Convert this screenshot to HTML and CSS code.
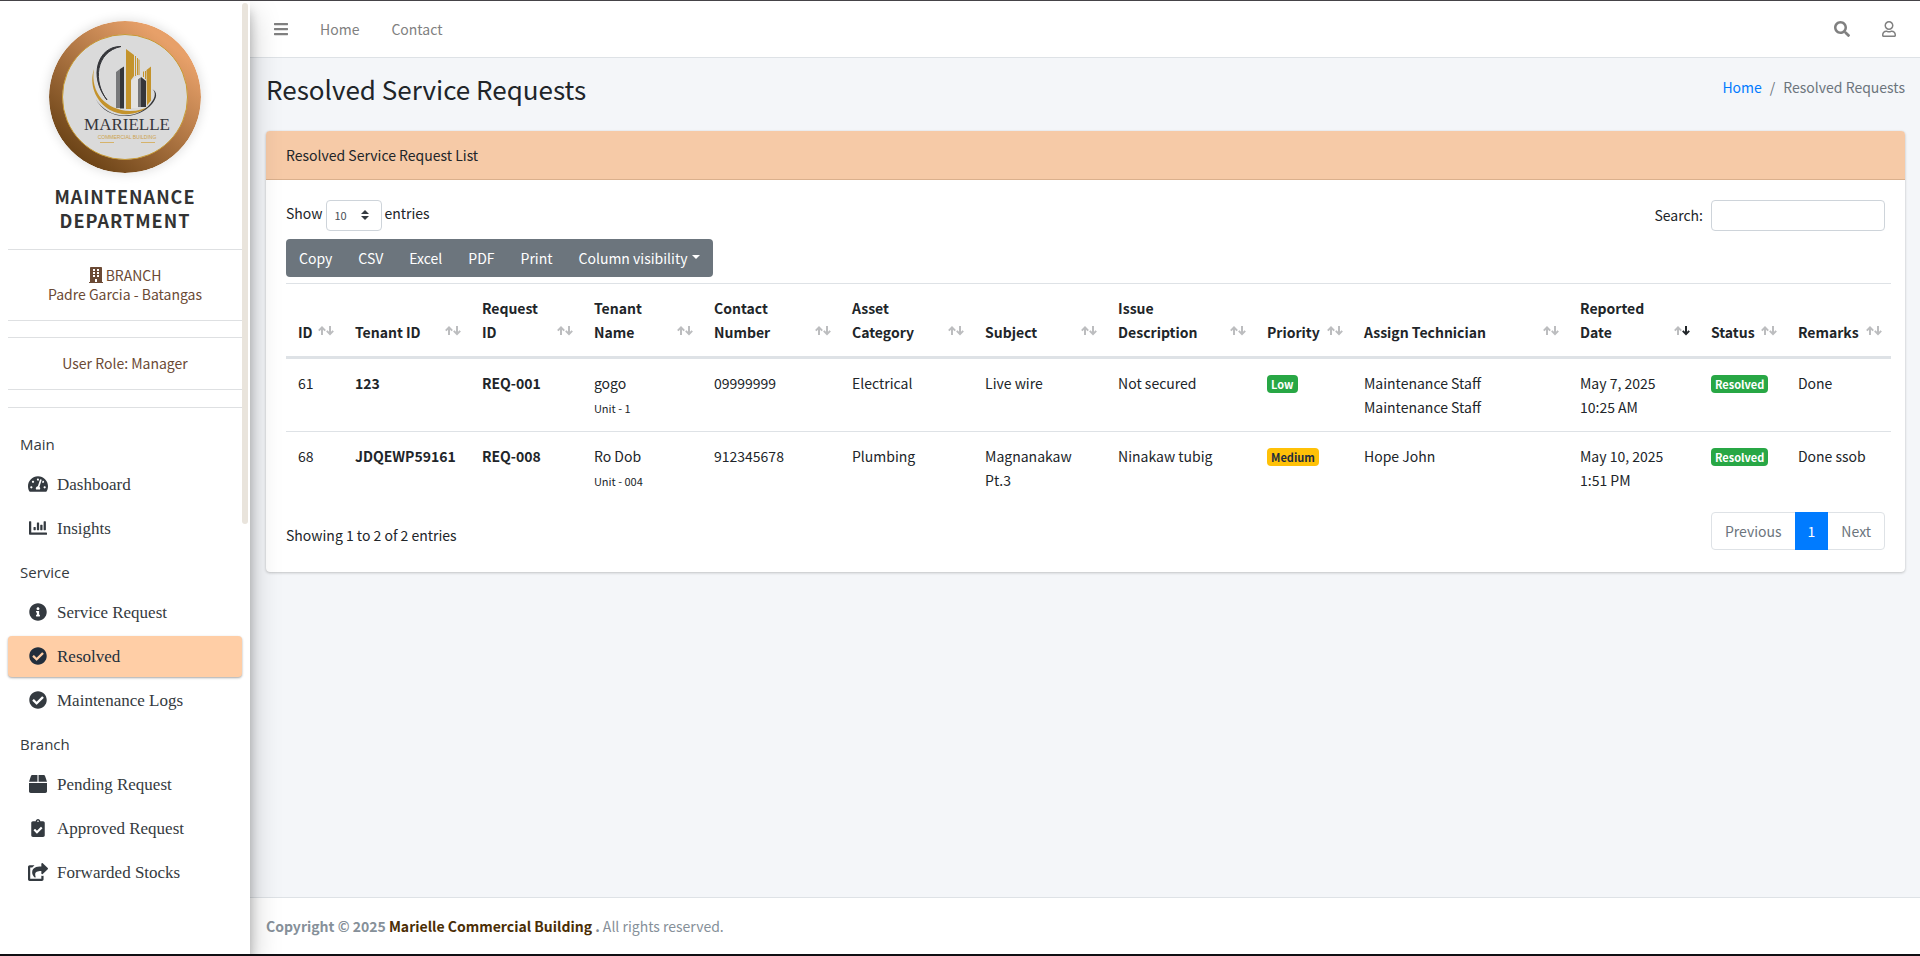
FILE: index.html
```html
<!DOCTYPE html>
<html lang="en">
<head>
<meta charset="utf-8">
<meta name="viewport" content="width=device-width, initial-scale=1">
<title>Resolved Service Requests</title>
<link rel="stylesheet" href="styles.css">
</head>
<body>
<svg class="sprite" aria-hidden="true">
  <symbol id="i-bars" viewBox="0 0 448 512"><path d="M16 132h416c8.837 0 16-7.163 16-16V76c0-8.837-7.163-16-16-16H16C7.163 60 0 67.163 0 76v40c0 8.837 7.163 16 16 16zm0 160h416c8.837 0 16-7.163 16-16v-40c0-8.837-7.163-16-16-16H16c-8.837 0-16 7.163-16 16v40c0 8.837 7.163 16 16 16zm0 160h416c8.837 0 16-7.163 16-16v-40c0-8.837-7.163-16-16-16H16c-8.837 0-16 7.163-16 16v40c0 8.837 7.163 16 16 16z"/></symbol>
  <symbol id="i-search" viewBox="0 0 512 512"><path d="M505 442.7L405.3 343c-4.5-4.5-10.6-7-17-7H372c27.6-35.3 44-79.7 44-128C416 93.1 322.9 0 208 0S0 93.1 0 208s93.1 208 208 208c48.3 0 92.7-16.4 128-44v16.3c0 6.4 2.5 12.5 7 17l99.7 99.7c9.4 9.4 24.6 9.4 33.9 0l28.3-28.3c9.4-9.4 9.4-24.6.1-34zM208 336c-70.7 0-128-57.2-128-128 0-70.7 57.2-128 128-128 70.7 0 128 57.2 128 128 0 70.7-57.2 128-128 128z"/></symbol>
  <symbol id="i-user" viewBox="0 0 448 512"><path d="M313.6 304c-28.7 0-42.5 16-89.6 16-47.1 0-60.8-16-89.6-16C60.2 304 0 364.2 0 438.4V464c0 26.5 21.5 48 48 48h352c26.5 0 48-21.5 48-48v-25.6c0-74.2-60.2-134.4-134.4-134.4zM400 464H48v-25.6c0-47.6 38.8-86.4 86.4-86.4 14.6 0 38.3 16 89.6 16 51.7 0 74.9-16 89.6-16 47.6 0 86.4 38.8 86.4 86.4V464zM224 288c79.5 0 144-64.5 144-144S303.5 0 224 0 80 64.5 80 144s64.5 144 144 144zm0-240c52.9 0 96 43.1 96 96s-43.1 96-96 96-96-43.1-96-96 43.1-96 96-96z"/></symbol>
  <symbol id="i-building" viewBox="0 0 448 512"><path fill-rule="evenodd" d="M436 480h-20V24c0-13.255-10.745-24-24-24H56C42.745 0 32 10.745 32 24v456H12c-6.627 0-12 5.373-12 12v20h448v-20c0-6.627-5.373-12-12-12zM128 64h64v64h-64zM256 64h64v64h-64zM128 160h64v64h-64zM256 160h64v64h-64zM128 256h64v64h-64zM256 256h64v64h-64zM192 384h64v96h-64z"/></symbol>
  <symbol id="i-dash" viewBox="0 0 576 512"><path d="M288 32C128.94 32 0 160.94 0 320c0 52.8 14.25 102.26 39.06 144.8 5.61 9.62 16.3 15.2 27.44 15.2h443c11.14 0 21.83-5.58 27.44-15.2C561.75 422.26 576 372.8 576 320c0-159.06-128.94-288-288-288zm0 64c14.71 0 26.58 10.13 30.32 23.65-1.11 2.26-2.64 4.23-3.45 6.67l-9.22 27.67c-5.13 3.49-10.97 6.01-17.64 6.01-17.67 0-32-14.33-32-32S270.33 96 288 96zM96 384c-17.67 0-32-14.33-32-32s14.33-32 32-32 32 14.33 32 32-14.33 32-32 32zm48-160c-17.67 0-32-14.33-32-32s14.33-32 32-32 32 14.33 32 32-14.33 32-32 32zm246.77-72.41l-61.33 184C343.13 347.33 352 364.54 352 384c0 11.72-3.38 22.55-8.88 32H232.88c-5.5-9.45-8.88-20.28-8.88-32 0-33.94 26.5-61.43 59.9-63.59l61.34-184.01c4.17-12.56 17.73-19.45 30.36-15.17 12.57 4.19 19.35 17.79 15.17 30.36zm14.66 57.2l15.52-46.55c3.47-1.29 7.13-2.23 11.05-2.23 17.67 0 32 14.33 32 32s-14.33 32-32 32c-11.38-.01-20.89-6.28-26.57-15.22zM480 384c-17.67 0-32-14.33-32-32s14.33-32 32-32 32 14.33 32 32-14.33 32-32 32z"/></symbol>
  <symbol id="i-chart" viewBox="0 0 512 512"><path d="M332.8 320h38.4c6.4 0 12.8-6.4 12.8-12.8V172.8c0-6.4-6.4-12.8-12.8-12.8h-38.4c-6.4 0-12.8 6.4-12.8 12.8v134.4c0 6.4 6.4 12.8 12.8 12.8zm96 0h38.4c6.4 0 12.8-6.4 12.8-12.8V76.8c0-6.4-6.4-12.8-12.8-12.8h-38.4c-6.4 0-12.8 6.4-12.8 12.8v230.4c0 6.4 6.4 12.8 12.8 12.8zm-288 0h38.4c6.4 0 12.8-6.4 12.8-12.8v-70.4c0-6.4-6.4-12.8-12.8-12.8h-38.4c-6.4 0-12.8 6.4-12.8 12.8v70.4c0 6.4 6.4 12.8 12.8 12.8zm96 0h38.4c6.4 0 12.8-6.4 12.8-12.8V108.8c0-6.4-6.4-12.8-12.8-12.8h-38.4c-6.4 0-12.8 6.4-12.8 12.8v198.4c0 6.4 6.4 12.8 12.8 12.8zM496 384H64V80c0-8.84-7.16-16-16-16H16C7.16 64 0 71.16 0 80v336c0 17.67 14.33 32 32 32h464c8.84 0 16-7.16 16-16v-32c0-8.84-7.16-16-16-16z"/></symbol>
  <symbol id="i-info" viewBox="0 0 512 512"><path d="M256 8C119.043 8 8 119.083 8 256c0 136.997 111.043 248 248 248s248-111.003 248-248C504 119.083 392.957 8 256 8zm0 110c23.196 0 42 18.804 42 42s-18.804 42-42 42-42-18.804-42-42 18.804-42 42-42zm56 254c0 6.627-5.373 12-12 12h-88c-6.627 0-12-5.373-12-12v-24c0-6.627 5.373-12 12-12h12v-64h-12c-6.627 0-12-5.373-12-12v-24c0-6.627 5.373-12 12-12h64c6.627 0 12 5.373 12 12v100h12c6.627 0 12 5.373 12 12v24z"/></symbol>
  <symbol id="i-check" viewBox="0 0 512 512"><path d="M504 256c0 136.967-111.033 248-248 248S8 392.967 8 256 119.033 8 256 8s248 111.033 248 248zM227.314 387.314l184-184c6.248-6.248 6.248-16.379 0-22.627l-22.627-22.627c-6.248-6.249-16.379-6.249-22.628 0L216 308.118l-70.059-70.059c-6.248-6.248-16.379-6.248-22.628 0l-22.627 22.627c-6.248 6.248-6.248 16.379 0 22.627l104 104c6.249 6.249 16.379 6.249 22.628.001z"/></symbol>
  <symbol id="i-box" viewBox="0 0 512 512"><path d="M509.5 184.6L458.9 32.8C452.4 13.2 434.1 0 413.4 0H272v192h238.7c-.4-2.5-.4-5-1.2-7.4zM240 0H98.6c-20.7 0-39 13.2-45.5 32.8L2.5 184.6c-.8 2.4-.8 4.9-1.2 7.4H240V0zM0 224v240c0 26.5 21.5 48 48 48h416c26.5 0 48-21.5 48-48V224H0z"/></symbol>
  <symbol id="i-clip" viewBox="0 0 384 512"><path d="M336 64h-80c0-35.3-28.7-64-64-64s-64 28.7-64 64H48C21.5 64 0 85.5 0 112v352c0 26.5 21.5 48 48 48h288c26.5 0 48-21.5 48-48V112c0-26.5-21.5-48-48-48zM192 40c13.3 0 24 10.7 24 24s-10.7 24-24 24-24-10.7-24-24 10.7-24 24-24zm121.2 231.8l-143 141.8c-4.7 4.7-12.3 4.6-17-.1l-82.6-83.3c-4.7-4.7-4.6-12.3.1-17L99.1 285c4.7-4.7 12.3-4.6 17 .1l46 46.4 106-105.2c4.7-4.7 12.3-4.6 17 .1l28.2 28.4c4.7 4.8 4.6 12.3-.1 17z"/></symbol>
  <symbol id="i-share" viewBox="0 0 576 512"><path d="M568.482 177.448L424.479 313.433C409.3 327.768 384 317.14 384 295.985v-71.963c-144.575.97-205.566 35.113-164.775 171.353 4.483 14.973-12.846 26.567-25.006 17.33C155.252 383.105 120 326.488 120 269.339c0-143.937 117.599-172.5 264-173.312V24.012c0-21.174 25.317-31.768 40.479-17.448l144.003 135.988c10.02 9.463 10.028 25.425 0 34.896zM384 379.128V448H64V128h50.916a11.99 11.99 0 0 0 8.648-3.693c14.953-15.568 32.237-27.89 51.014-37.676C185.708 80.83 181.584 64 169.033 64H48C21.49 64 0 85.49 0 112v352c0 26.51 21.49 48 48 48h352c26.51 0 48-21.49 48-48v-88.806c0-8.288-8.197-14.066-16.011-11.302a71.83 71.83 0 0 1-34.189 3.377c-7.27-1.046-13.8 4.514-13.8 11.859z"/></symbol>
  <symbol id="i-sort" viewBox="0 0 16 10"><path class="sort-up" d="M4 9V1.500M0.800 4.600L4 1.400 7.200 4.600"/><path class="sort-down" d="M12 0V8M8.800 4.900L12 8.100 15.200 4.900"/></symbol>
</svg>
<div class="app">
  <aside class="sidebar">
    <div class="sidebar-body">
      <div class="brand">
        <svg class="logo" viewBox="0 0 152 152" role="img" aria-label="Marielle Commercial Building">
          <defs><linearGradient id="ring" x1="0.25" y1="0.95" x2="0.85" y2="0.2"><stop offset="0" stop-color="#6b4316"/><stop offset="1" stop-color="#e7a069"/></linearGradient></defs>
          <circle cx="76" cy="76" r="76" fill="url(#ring)"/>
          <circle cx="76" cy="76" r="62.500" fill="#dadada" stroke="#c79a34"/>
          <g fill="#c4932b">
            <path d="M77 28l8 6v21l-3 4v29h-5zM86 35h1v20h-1zM88 37h1v17h-1zM89.500 38l1 1v15h-1z"/>
            <path d="M94 51l1-1v6h-1zM96 50h1v8h-1zM97.500 49l4.500-3.500v34l-4 5z"/>
            <path d="M45 48c-4 24 12 41 36 42 8 0 15-2 21-6-11 10-29 12-41 5-15-9-21-26-16-41z"/>
          </g>
          <g fill="#35363a">
            <path d="M71 48l4-2.500v42h-4zM92 56l5 4v26h-5z"/>
            <path d="M72 25.500C49 25 39 55 58 79 44 61 46 31 72 25.500z" stroke="#35363a"/>
            <path d="M46 77c14 24 46 22 58 2 3-5 2-9-1-11 6 3 5 9 0 15-15 17-45 17-57-6z"/>
          </g>
          <path fill="#77787a" d="M67 51l4-3v39h-4zM89 58l3-2v30h-3z"/>
          <path fill="#e4e3e0" d="M82 60l7-5 3 1-3 2v29h-7z"/>
          <text class="logo-name" x="78" y="109" text-anchor="middle">MARIELLE</text>
          <text class="logo-sub" x="78" y="118" text-anchor="middle">COMMERCIAL BUILDING</text>
          <path d="M51 121.500h14M92 121.500h14" stroke="#d6b36a"/>
        </svg>
        <h2 class="brand-title">Maintenance<br>Department</h2>
      </div>
      <div class="info">
        <div><svg class="icon icon-branch"><use href="#i-building"/></svg> BRANCH</div>
        <div>Padre Garcia - Batangas</div>
      </div>
      <div class="info">User Role: Manager</div>
      <nav class="menu">
        <h3 class="menu-title">Main</h3>
        <a class="menu-link" href="#"><svg class="icon icon-menu"><use href="#i-dash"/></svg>Dashboard</a>
        <a class="menu-link" href="#"><svg class="icon icon-menu"><use href="#i-chart"/></svg>Insights</a>
        <h3 class="menu-title">Service</h3>
        <a class="menu-link" href="#"><svg class="icon icon-menu"><use href="#i-info"/></svg>Service Request</a>
        <a class="menu-link active" href="#"><svg class="icon icon-menu"><use href="#i-check"/></svg>Resolved</a>
        <a class="menu-link" href="#"><svg class="icon icon-menu"><use href="#i-check"/></svg>Maintenance Logs</a>
        <h3 class="menu-title">Branch</h3>
        <a class="menu-link" href="#"><svg class="icon icon-menu"><use href="#i-box"/></svg>Pending Request</a>
        <a class="menu-link" href="#"><svg class="icon icon-menu"><use href="#i-clip"/></svg>Approved Request</a>
        <a class="menu-link" href="#"><svg class="icon icon-menu"><use href="#i-share"/></svg>Forwarded Stocks</a>
      </nav>
    </div>
    <div class="scroll-thumb"></div>
  </aside>
  <div class="page">
    <header class="navbar">
      <nav class="nav-group">
        <button class="nav-item" type="button" aria-label="Toggle menu"><svg class="icon icon-bars"><use href="#i-bars"/></svg></button>
        <a class="nav-item" href="#">Home</a>
        <a class="nav-item" href="#">Contact</a>
      </nav>
      <div class="nav-group">
        <button class="nav-item" type="button" aria-label="Search"><svg class="icon icon-16"><use href="#i-search"/></svg></button>
        <button class="nav-item" type="button" aria-label="Account"><svg class="icon icon-bars"><use href="#i-user"/></svg></button>
      </div>
    </header>
    <main class="content">
      <div class="content-head">
        <h1 class="title">Resolved Service Requests</h1>
        <nav class="crumbs"><a href="#">Home</a><span>/</span><span>Resolved Requests</span></nav>
      </div>
      <section class="card">
        <div class="card-head">Resolved Service Request List</div>
        <div class="card-body">
          <div class="tools">
            <div class="tools-left">
              <div class="length">
                <label for="len">Show</label>
                <span class="select-box"><select id="len" aria-label="Entries per page"><option>10</option><option>25</option><option>50</option></select><svg class="select-arrows" viewBox="0 0 8 10"><path d="M4 0L8 4H0zM4 10L0 6h8z"/></svg></span>
                <span>entries</span>
              </div>
              <div class="btn-group">
                <button class="btn" type="button">Copy</button><button class="btn" type="button">CSV</button><button class="btn" type="button">Excel</button><button class="btn" type="button">PDF</button><button class="btn" type="button">Print</button><button class="btn caret" type="button">Column visibility</button>
              </div>
            </div>
            <div class="search"><label for="q">Search:</label><input id="q" type="search"></div>
          </div>
          <div class="table-wrap">
            <table class="grid">
              <colgroup><col class="w-id"><col class="w-tid"><col class="w-req"><col class="w-name"><col class="w-con"><col class="w-std"><col class="w-std"><col class="w-issue"><col class="w-pri"><col class="w-tech"><col class="w-date"><col class="w-stat"><col class="w-rem"></colgroup>
              <thead>
                <tr>
                  <th><button class="sort" type="button"><span>ID</span><svg><use href="#i-sort"/></svg></button></th>
                  <th><button class="sort" type="button"><span>Tenant ID</span><svg><use href="#i-sort"/></svg></button></th>
                  <th><button class="sort" type="button"><span>Request<br>ID</span><svg><use href="#i-sort"/></svg></button></th>
                  <th><button class="sort" type="button"><span>Tenant<br>Name</span><svg><use href="#i-sort"/></svg></button></th>
                  <th><button class="sort" type="button"><span>Contact<br>Number</span><svg><use href="#i-sort"/></svg></button></th>
                  <th><button class="sort" type="button"><span>Asset<br>Category</span><svg><use href="#i-sort"/></svg></button></th>
                  <th><button class="sort" type="button"><span>Subject</span><svg><use href="#i-sort"/></svg></button></th>
                  <th><button class="sort" type="button"><span>Issue<br>Description</span><svg><use href="#i-sort"/></svg></button></th>
                  <th><button class="sort" type="button"><span>Priority</span><svg><use href="#i-sort"/></svg></button></th>
                  <th><button class="sort" type="button"><span>Assign Technician</span><svg><use href="#i-sort"/></svg></button></th>
                  <th aria-sort="descending"><button class="sort desc" type="button"><span>Reported<br>Date</span><svg><use href="#i-sort"/></svg></button></th>
                  <th><button class="sort" type="button"><span>Status</span><svg><use href="#i-sort"/></svg></button></th>
                  <th><button class="sort" type="button"><span>Remarks</span><svg><use href="#i-sort"/></svg></button></th>
                </tr>
              </thead>
              <tbody>
                <tr>
                  <td>61</td><td><b>123</b></td><td><b>REQ-001</b></td><td>gogo<br><small>Unit - 1</small></td><td>09999999</td><td>Electrical</td><td>Live wire</td><td>Not secured</td><td><span class="badge green">Low</span></td><td>Maintenance Staff<br>Maintenance Staff</td><td>May 7, 2025<br>10:25 AM</td><td><span class="badge green">Resolved</span></td><td>Done</td>
                </tr>
                <tr>
                  <td>68</td><td><b>JDQEWP59161</b></td><td><b>REQ-008</b></td><td>Ro Dob<br><small>Unit - 004</small></td><td>912345678</td><td>Plumbing</td><td>Magnanakaw Pt.3</td><td>Ninakaw tubig</td><td><span class="badge yellow">Medium</span></td><td>Hope John</td><td>May 10, 2025<br>1:51 PM</td><td><span class="badge green">Resolved</span></td><td>Done ssob</td>
                </tr>
              </tbody>
            </table>
          </div>
          <div class="table-foot">
            <div class="table-info">Showing 1 to 2 of 2 entries</div>
            <nav class="pager"><a href="#">Previous</a><a class="current" href="#">1</a><a href="#">Next</a></nav>
          </div>
        </div>
      </section>
    </main>
    <footer class="footer"><b>Copyright © 2025 <a href="#">Marielle Commercial Building</a> .</b> All rights reserved.</footer>
  </div>
</div>
</body>
</html>
```
FILE: styles.css
```css
*, *::before, *::after { box-sizing: border-box; }
body {
  margin: 0;
  min-height: 100vh;
  display: flex;
  flex-direction: column;
  border-top: 1px solid #454347;
  border-bottom: 2px solid #100e12;
  background: #f4f6f9;
  color: #212529;
  font-family: "Noto Sans CJK SC", "Noto Sans CJK JP", "Open Sans", sans-serif;
  font-size: 14px;
  line-height: 24px;
}
button, input, select { font: inherit; color: inherit; }
button { border: 0; background: none; padding: 0; cursor: pointer; }
a { text-decoration: none; }
.sprite { position: absolute; width: 0; height: 0; }
.icon { fill: currentColor; display: inline-block; flex: none; }
.icon-16 { width: 16px; height: 16px; }
.icon-bars { width: 14px; height: 16px; }
.icon-branch { width: 14px; height: 16px; vertical-align: -2px; }

.app { flex: 1; display: flex; }

/* Sidebar */
.sidebar {
  position: relative;
  z-index: 2;
  flex: none;
  width: 250px;
  background: #fff;
  box-shadow: 0 14px 28px rgba(0, 0, 0, .25), 0 10px 10px rgba(0, 0, 0, .22);
}
.sidebar-body { padding: 20px 8px 0; }
.scroll-thumb {
  position: absolute;
  top: 2px;
  right: 2px;
  width: 6px;
  height: 521px;
  border-radius: 3px;
  background: #e9e4dc;
}
.brand {
  display: flex;
  flex-direction: column;
  align-items: center;
  padding-bottom: 17px;
  border-bottom: 1px solid #dee0e2;
}
.logo {
  width: 152px;
  height: 152px;
  border-radius: 50%;
  box-shadow: 0 0 12px rgba(0, 0, 0, .15);
}
.logo-name { font: 17px "Liberation Serif", serif; fill: #35363a; }
.logo-sub { font: 5px "Liberation Sans", sans-serif; fill: #cda34d; }
.brand-title {
  margin: 11px 0 0;
  color: #333;
  font-size: 18px;
  line-height: 24px;
  letter-spacing: 1px;
  text-transform: uppercase;
  text-align: center;
}
.info {
  padding: 16px 0;
  color: #6b4a35;
  line-height: 19px;
  text-align: center;
  border-bottom: 1px solid #dee0e2;
}
.info + .info {
  margin-top: 16px;
  border-top: 1px solid #dee0e2;
}
.menu {
  margin-top: 17px;
  padding-top: 16px;
  border-top: 1px solid #dee0e2;
}
.menu-title {
  margin: 0;
  padding: 8px 12px;
  color: #343a40;
  font: 15px/24px "Open Sans", sans-serif;
}
.menu-link {
  display: flex;
  align-items: center;
  gap: 9px;
  height: 41px;
  margin-bottom: 3px;
  padding: 0 20px;
  border-radius: 4px;
  color: #343a40;
  font-family: "Liberation Serif", serif;
  font-size: 17px;
}
.icon-menu { width: 20px; height: 18px; margin-bottom: 2px; }
.menu-link.active {
  background: #ffcea6;
  color: #222e3c;
  box-shadow: 0 1px 3px rgba(0, 0, 0, .12), 0 1px 2px rgba(0, 0, 0, .24);
}

/* Top bar */
.page { flex: 1; min-width: 0; display: flex; flex-direction: column; }
.navbar {
  display: flex;
  justify-content: space-between;
  align-items: center;
  height: 57px;
  padding: 0 8px;
  background: #fff;
  border-bottom: 1px solid #dee2e6;
}
.nav-group { display: flex; }
.nav-item {
  display: flex;
  align-items: center;
  height: 40px;
  padding: 0 16px;
  color: #808080;
}

/* Content */
.content { flex: 1; padding: 0 15px 0 16px; }
.content-head {
  display: flex;
  justify-content: space-between;
  padding: 14px 0 25px;
}
.title { margin: 0; font-size: 26px; font-weight: 400; line-height: 34px; }
.crumbs { display: flex; gap: 8px; padding-top: 3px; color: #6c757d; }
.crumbs a { color: #007bff; }
.card {
  border-radius: 4px;
  background: #fff;
  box-shadow: 0 0 1px rgba(0, 0, 0, .13), 0 1px 3px rgba(0, 0, 0, .2);
}
.card-head {
  padding: 12px 20px;
  border-bottom: 1px solid #dab08d;
  border-radius: 4px 4px 0 0;
  background: #f6caa7;
}
.card-body { padding: 20px 20px 22px; }
.tools { display: flex; justify-content: space-between; align-items: flex-start; }
.length { display: flex; gap: 3px; line-height: 27px; margin-bottom: 8px; }
.select-box { position: relative; display: flex; }
.select-box select {
  appearance: none;
  width: 56px;
  height: 31px;
  padding: 0 8px;
  border: 1px solid #ced4da;
  border-radius: 4px;
  background: #fff;
  color: #495057;
  font-size: 11px;
}
.select-arrows {
  position: absolute;
  top: 10px;
  right: 13px;
  width: 8px;
  height: 10px;
  fill: #343a40;
  pointer-events: none;
}
.btn-group { display: flex; width: max-content; border-radius: 4px; background: #6c757d; }
.btn { height: 38px; padding: 0 13px; color: #fff; }
.btn.caret { display: flex; align-items: center; gap: 4px; }
.btn.caret::after {
  content: "";
  margin-bottom: 3px;
  border: 4px solid transparent;
  border-top-color: #fff;
  border-bottom: 0;
}
.search { display: flex; gap: 8px; line-height: 30px; }
.search input {
  width: 174px;
  height: 31px;
  padding: 4px 8px;
  border: 1px solid #ced4da;
  border-radius: 4px;
  background: #fff;
}

/* Table */
.table-wrap { margin: 6px -6px 8px 0; }
.grid { width: 100%; table-layout: fixed; border-collapse: separate; border-spacing: 0; }
.grid th {
  padding: 12px 9px 12px 12px;
  border-top: 1px solid #dee2e6;
  border-bottom: 2px solid #dee2e6;
  text-align: left;
  vertical-align: bottom;
}
.grid td { padding: 12px; border-top: 1px solid #dee2e6; vertical-align: top; }
.grid small { font-size: 11px; line-height: 1; }
.w-id { width: 3.55%; }
.w-tid { width: 7.91%; }
.w-req { width: 6.98%; }
.w-name { width: 7.48%; }
.w-con { width: 8.6%; }
.w-std { width: 8.29%; }
.w-issue { width: 9.28%; }
.w-pri { width: 6.04%; }
.w-tech { width: 13.46%; }
.w-date { width: 8.16%; }
.w-stat { width: 5.42%; }
.w-rem { width: 6.54%; }
.sort {
  display: flex;
  justify-content: space-between;
  align-items: flex-end;
  width: 100%;
  font-weight: 700;
  text-align: left;
  white-space: nowrap;
}
.sort svg {
  flex: none;
  width: 16px;
  height: 10px;
  margin-bottom: 8px;
  fill: none;
  stroke: #bcbdbf;
  stroke-width: 2;
}
.sort.desc svg { --down: #212529; }
.sort-down { stroke: var(--down, #bcbdbf); }
.badge {
  display: inline-block;
  padding: 0 4px;
  border-radius: 4px;
  font-size: 11px;
  font-weight: 700;
  line-height: 18px;
}
.green { background: #28a745; color: #fff; }
.yellow { background: #ffc107; color: #1f2d3d; }
.table-foot { display: flex; justify-content: space-between; align-items: center; }
.table-info { padding-top: 8px; }
.pager { display: flex; border: 1px solid #dee2e6; border-radius: 4px; }
.pager a { padding: 6px 13px; color: #6c757d; }
.pager .current { margin: -1px 0; padding: 7px 13px; background: #007bff; color: #fff; }

.footer {
  padding: 16px;
  border-top: 1px solid #dee2e6;
  background: #fff;
  color: #869099;
}
.footer a { color: #4b2e05; }
```
